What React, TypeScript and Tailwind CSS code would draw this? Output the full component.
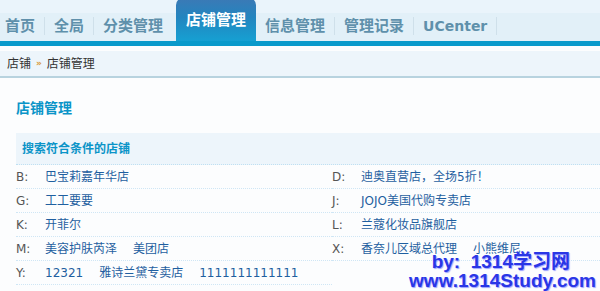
import React from "react";

const tabs = ["首页", "全局", "分类管理", "店铺管理", "信息管理", "管理记录", "UCenter"];

const left: [string, string[]][] = [
  ["B:", ["巴宝莉嘉年华店"]],
  ["G:", ["工工要要"]],
  ["K:", ["开菲尔"]],
  ["M:", ["美容护肤芮泽", "美团店"]],
  ["Y:", ["12321", "雅诗兰黛专卖店", "1111111111111"]],
];
const right: [string, string[]][] = [
  ["D:", ["迪奥直营店，全场5折！"]],
  ["J:", ["JOJO美国代购专卖店"]],
  ["L:", ["兰蔻化妆品旗舰店"]],
  ["X:", ["香奈儿区域总代理", "小熊维尼"]],
];

const font = { fontFamily: '"DejaVu Sans", "Noto Sans CJK SC", sans-serif' };

function Row({ label, items }: { label: string; items: string[] }) {
  return (
    <div className="flex h-[24px] items-center border-b border-dotted border-[#cfe6f5] text-[12px]">
      <span className="w-[29px] text-[#555]">{label}</span>
      <div className="flex gap-[16px] text-[#1f5fa0]">
        {items.map((t) => (
          <span key={t}>{t}</span>
        ))}
      </div>
    </div>
  );
}

export default function App() {
  return (
    <div className="relative h-[291px] w-[600px] overflow-hidden bg-[#fcfdfe]" style={font}>
      {/* tab bar */}
      <div className="bg-[#eaf4fb] pt-[3px]">
        <div className="flex h-[43px] items-end border-b-[5px] border-[#0a9acb] bg-[linear-gradient(#eaf4fb_0,#eaf4fb_10px,#e2f0f8_10px,#e2f0f8)]">
          {tabs.map((t, i) => {
            const active = t === "店铺管理";
            const nextActive = tabs[i + 1] === "店铺管理";
            return (
              <div key={t} className="flex items-end">
                {active ? (
                  <div className="ml-[8px] flex h-[43px] w-[80px] items-center justify-center rounded-t-[7px] bg-[linear-gradient(#3c79b5,#2385bf_45%,#16a0d2)] pt-[2px] text-[15px] font-bold text-white">
                    {t}
                  </div>
                ) : (
                  <div className="flex h-[30px] items-center">
                    <span
                      className="px-[5px] text-[15px] font-bold text-[#5f90ab]"
                      style={t === "UCenter" ? { fontFamily: '"DejaVu Sans", sans-serif', fontSize: 14 } : undefined}
                    >
                      {t}
                    </span>
                    {!nextActive && <span className="mx-[4px] h-[18px] w-px bg-[#cfe0ea]" />}
                  </div>
                )}
                {active && <span className="w-[4px]" />}
              </div>
            );
          })}
        </div>
      </div>
      {/* breadcrumb */}
      <div className="mt-[5px] flex h-[27px] items-center border-b-2 border-[#b8d3df] bg-[#edf5fb] pl-[7px] text-[12px] text-[#333]">
        <span>店铺</span>
        <span className="mx-[5px] text-[9px] font-bold text-[#d89a3c]">»</span>
        <span>店铺管理</span>
      </div>
      {/* content */}
      <div className="pl-[16px] pt-[20px]">
        <div className="text-[14px] font-bold text-[#0a94c8]">店铺管理</div>
        <div className="mt-[14px] flex h-[32px] items-center border-b border-dotted border-[#bfe0f2] bg-[#edf5fb] pl-[6px] text-[12px] font-bold text-[#0a94c8]">
          搜索符合条件的店铺
        </div>
        <div className="flex">
          <div className="w-[316px]">
            {left.map(([l, it]) => (
              <Row key={l} label={l} items={it} />
            ))}
          </div>
          <div className="flex-1">
            {right.map(([l, it]) => (
              <Row key={l} label={l} items={it} />
            ))}
          </div>
        </div>
      </div>
      {/* watermark */}
      <div
        className="absolute right-[4px] top-[252px] flex flex-col items-end text-[19px] font-bold leading-[19px] text-[#2a36e6] [text-shadow:1px_1px_1px_#9aa0ff]"
        style={{ fontFamily: '"Liberation Sans", "Noto Sans CJK SC", sans-serif' }}
      >
        <span className="mr-[26px]">by:&nbsp;&nbsp;1314学习网</span>
        <span>www.1314Study.com</span>
      </div>
    </div>
  );
}
